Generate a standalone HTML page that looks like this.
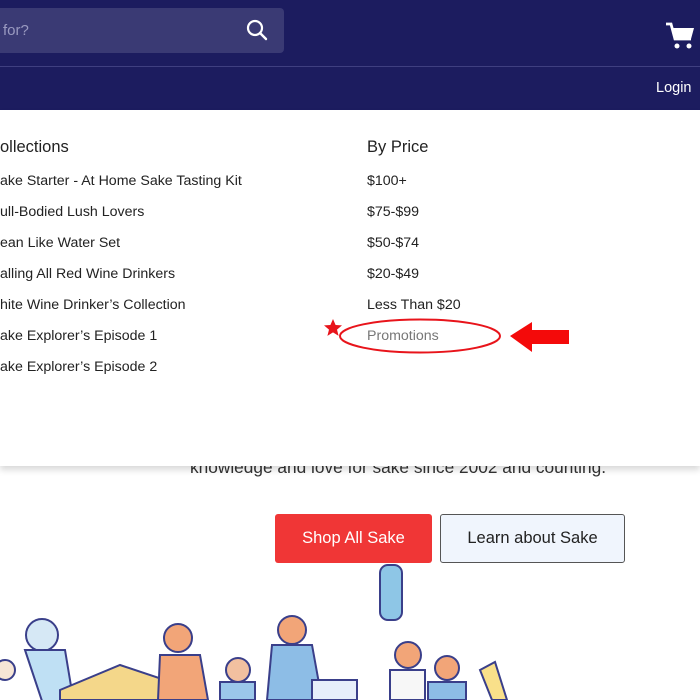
<!DOCTYPE html>
<html><head><style>
body{margin:0;width:700px;height:700px;overflow:hidden;background:#fff;font-family:"Liberation Sans",sans-serif;position:relative}
.hdr{position:absolute;left:0;top:0;width:700px;height:110px;background:#1c1c5f}
.line{position:absolute;left:0;top:66px;width:700px;height:1px;background:#3f3f80}
.search{position:absolute;left:0;top:8px;width:284px;height:45px;background:#3a3a74;border-radius:0 4px 4px 0}
.search span{position:absolute;left:3px;top:14px;color:#9a9ac0;font-size:15px}
.t{position:absolute;white-space:nowrap;color:#222;font-size:14.2px}
.h{font-size:16.5px}
.drop{position:absolute;left:0;top:110px;width:700px;height:356px;background:#fff;box-shadow:0 4px 6px rgba(0,0,0,.15)}
.btn{position:absolute;top:514px;height:49px;font-size:16.5px;display:flex;align-items:center;justify-content:center;border-radius:3px;box-sizing:border-box}
</style></head><body>
<div class="hdr"><div class="line"></div>
<div class="search"><span>for?</span>
<svg style="position:absolute;left:246px;top:11px" width="22" height="22" viewBox="0 0 22 22"><circle cx="9" cy="9" r="7" fill="none" stroke="#fff" stroke-width="2.2"/><path d="M14 14l6 6" stroke="#fff" stroke-width="2.4" stroke-linecap="round"/></svg></div>
<svg style="position:absolute;left:665px;top:22px" width="30" height="28" viewBox="0 0 30 28"><path d="M1 2h5l4 15h16" stroke="#fff" stroke-width="2.8" fill="none"/><path d="M8 6h21l-3 11H10z" fill="#fff"/><circle cx="12" cy="24" r="2.5" fill="#fff"/><circle cx="24" cy="24" r="2.5" fill="#fff"/></svg>
<div class="t" style="left:656px;top:80px;color:#fff;font-size:14.5px">Login</div>
</div>
<div class="t" style="left:190px;top:457px;font-size:17.3px;color:#333">knowledge and love for sake since 2002 and counting.</div>
<div class="drop">
<div class="t h" style="left:0;top:28px">ollections</div>
<div class="t" style="left:0;top:63px">ake Starter - At Home Sake Tasting Kit</div>
<div class="t" style="left:0;top:94px">ull-Bodied Lush Lovers</div>
<div class="t" style="left:0;top:125px">ean Like Water Set</div>
<div class="t" style="left:0;top:156px">alling All Red Wine Drinkers</div>
<div class="t" style="left:0;top:187px">hite Wine Drinker’s Collection</div>
<div class="t" style="left:0;top:218px">ake Explorer’s Episode 1</div>
<div class="t" style="left:0;top:249px">ake Explorer’s Episode 2</div>
<div class="t h" style="left:367px;top:28px">By Price</div>
<div class="t" style="left:367px;top:63px">$100+</div>
<div class="t" style="left:367px;top:94px">$75-$99</div>
<div class="t" style="left:367px;top:125px">$50-$74</div>
<div class="t" style="left:367px;top:156px">$20-$49</div>
<div class="t" style="left:367px;top:187px">Less Than $20</div>
<div class="t" style="left:367px;top:218px;color:#777">Promotions</div>
</div>
<svg style="position:absolute;left:320px;top:315px" width="260" height="45" viewBox="0 0 260 45">
<ellipse cx="100" cy="21" rx="80" ry="16.5" fill="none" stroke="#e8141b" stroke-width="2"/>
<path d="M13 4l2.6 6 6.4.4-5 4.2 1.6 6.3-5.6-3.5-5.6 3.5 1.6-6.3-5-4.2 6.4-.4z" fill="#e8141b"/>
<path d="M190 21l22-14v8h37v14h-37v8z" fill="#f40a0a"/>
</svg>
<div class="btn" style="left:275px;width:157px;background:#f03636;color:#fff">Shop All Sake</div>
<div class="btn" style="left:440px;width:185px;background:#f0f5fd;border:1.5px solid #555;color:#222">Learn about Sake</div>
<svg style="position:absolute;left:0;top:560px" width="520" height="140" viewBox="0 0 520 140">
<g stroke="#3a3f8a" stroke-width="2">
<rect x="380" y="5" width="22" height="55" rx="8" fill="#8ec6e6"/>
<circle cx="42" cy="75" r="16" fill="#d6e8f5"/><path d="M25 90l20 60h30l-10-60z" fill="#bfe0f4"/>
<path d="M60 130l60-25 60 20-10 15H60z" fill="#f4d78a"/>
<circle cx="178" cy="78" r="14" fill="#f2a578"/><path d="M160 95h40l8 45h-50z" fill="#f2a578"/>
<circle cx="238" cy="110" r="12" fill="#f2c0a0"/><path d="M220 122h35v18h-35z" fill="#9bc7ea"/>
<circle cx="292" cy="70" r="14" fill="#f2a578"/><path d="M272 85h40l10 55h-55z" fill="#8dbde6"/>
<path d="M312 120h45v20h-45z" fill="#e6eefa"/>
<circle cx="408" cy="95" r="13" fill="#f2a578"/><path d="M390 110h35v30h-35z" fill="#f7f7f7"/>
<circle cx="447" cy="108" r="12" fill="#f2a578"/><path d="M428 122h38v18h-38z" fill="#8dbde6"/>
<path d="M480 110l15-8 12 38h-15z" fill="#f9e08a"/>
<circle cx="5" cy="110" r="10" fill="#f7e6d6"/>
</g></svg>
</body></html>
